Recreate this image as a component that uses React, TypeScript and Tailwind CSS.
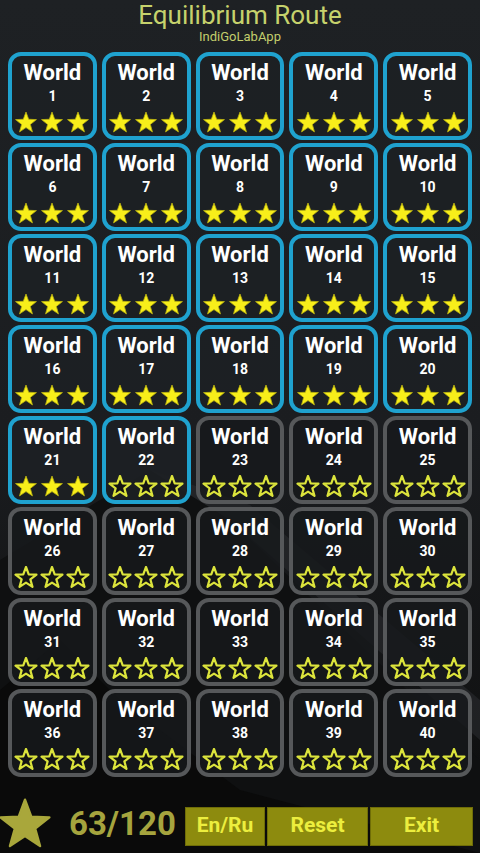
import React from 'react';

const worlds = Array.from({ length: 40 }, (_, i) => ({
  id: i + 1,
  unlocked: i < 22,
  stars: i < 21 ? 3 : 0,
}));

const STAR = '12,1 14.7,8.28 22.46,8.6 16.37,13.42 18.47,20.9 12,16.6 5.53,20.9 7.63,13.42 1.54,8.6 9.3,8.28';

const Star = ({ filled }: { filled: boolean }) => (
  <svg viewBox="0 0 24 22" className="w-[24px] h-[22px]">
    {filled ? (
      <polygon points={STAR} fill="#f8ee1a" stroke="#b8b010" strokeWidth="0.8" strokeLinejoin="round" />
    ) : (
      <polygon points={STAR} fill="#141414" stroke="#dce43c" strokeWidth="2.2" strokeLinejoin="round" />
    )}
  </svg>
);

const Tile = ({ id, unlocked, stars }: { id: number; unlocked: boolean; stars: number }) => (
  <div
    className={`h-[88px] rounded-[13px] border-[4px] flex flex-col items-center pt-[4px] ${
      unlocked ? 'border-[#1fa2cf] bg-[#1d2023]/90' : 'border-[#56585a] bg-[#17191b]/80'
    }`}
  >
    <span className="text-[22px] leading-[26px] font-bold text-white">World</span>
    <span className="text-[14px] leading-[18px] font-bold text-white mt-[1px]">{id}</span>
    <div className="flex gap-[2px] mt-[6px]">
      {[0, 1, 2].map((s) => (
        <Star key={s} filled={s < stars} />
      ))}
    </div>
  </div>
);

const App = () => {
  return (
    <div
      className="relative w-[480px] h-[853px] overflow-hidden bg-[#1c1f22]"
      style={{ fontFamily: 'Roboto, "Liberation Sans", sans-serif' }}
    >
      {/* background scenery */}
      <svg className="absolute inset-0 w-full h-full" viewBox="0 0 480 853" preserveAspectRatio="none">
        <defs>
          <linearGradient id="bg" x1="0" y1="0" x2="0" y2="1">
            <stop offset="0" stopColor="#1e2124" />
            <stop offset="0.5" stopColor="#1b1d20" />
            <stop offset="0.85" stopColor="#111213" />
            <stop offset="1" stopColor="#0b0b0b" />
          </linearGradient>
        </defs>
        <rect width="480" height="853" fill="url(#bg)" />
        <polygon points="0,853 0,560 150,470 230,520 480,760 480,853" fill="#0f1011" />
        <polygon points="150,470 230,520 480,740 480,700 250,505" fill="#2a2c2e" opacity="0.6" />
        <polygon points="0,853 0,690 60,640 120,700 240,790 480,853" fill="#0a0a0a" />
      </svg>

      <div className="relative flex flex-col h-full">
        {/* Header */}
        <div className="flex flex-col items-center h-[49px]">
          <h1 className="text-[26px] leading-[31px] text-[#c6d26c]">Equilibrium Route</h1>
          <p className="text-[13px] leading-[13px] text-[#c3ce6c] -mt-[1px]">IndiGoLabApp</p>
        </div>

        {/* World grid */}
        <div className="grid grid-cols-5 gap-x-[5px] gap-y-[3px] px-[8px] pt-[3px]">
          {worlds.map((w) => (
            <Tile key={w.id} {...w} />
          ))}
        </div>

        {/* Bottom bar */}
        <div className="flex items-center mt-auto mb-0 h-[60px]">
          <svg viewBox="0 0 24 22" className="w-[56px] h-[52px] -ml-[3px]">
            <polygon points={STAR} fill="#a9a73b" strokeLinejoin="round" stroke="#a9a73b" strokeWidth="1" />
          </svg>
          <span className="ml-[16px] text-[33px] font-bold text-[#a5a43e] leading-none">63/120</span>
          <div className="flex ml-auto mr-[7px] gap-[2px] h-[39px] mt-[6px]">
            <button className="w-[80px] bg-[#8d8b0e] border border-[#6f6d08] text-[#ecee3e] text-[21px] font-bold">En/Ru</button>
            <button className="w-[101px] bg-[#8d8b0e] border border-[#6f6d08] text-[#ecee3e] text-[21px] font-bold">Reset</button>
            <button className="w-[103px] bg-[#8d8b0e] border border-[#6f6d08] text-[#ecee3e] text-[21px] font-bold">Exit</button>
          </div>
        </div>
      </div>
    </div>
  );
};

export default App;
